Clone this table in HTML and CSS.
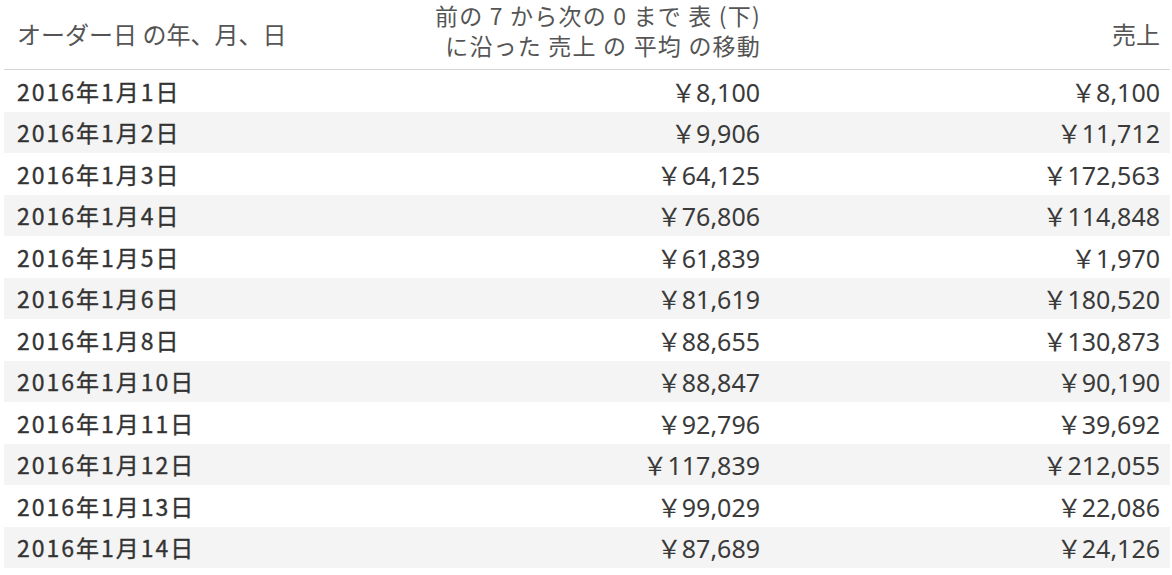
FILE: index.html
```html
<!DOCTYPE html>
<html lang="ja">
<head>
<meta charset="utf-8">
<link rel="stylesheet" href="styles.css">
</head>
<body>
<div class="table">
  <div class="row head">
    <div class="cell c1">オーダー日 の年、月、日</div>
    <div class="cell c2"><span>前の 7 から次の 0 まで 表 (下)</span><span>に沿った 売上 の 平均 の移動</span></div>
    <div class="cell c3">売上</div>
  </div>
  <div class="row"><div class="cell c1">2016年1月1日</div><div class="cell c2">￥8,100</div><div class="cell c3">￥8,100</div></div>
  <div class="row alt"><div class="cell c1">2016年1月2日</div><div class="cell c2">￥9,906</div><div class="cell c3">￥11,712</div></div>
  <div class="row"><div class="cell c1">2016年1月3日</div><div class="cell c2">￥64,125</div><div class="cell c3">￥172,563</div></div>
  <div class="row alt"><div class="cell c1">2016年1月4日</div><div class="cell c2">￥76,806</div><div class="cell c3">￥114,848</div></div>
  <div class="row"><div class="cell c1">2016年1月5日</div><div class="cell c2">￥61,839</div><div class="cell c3">￥1,970</div></div>
  <div class="row alt"><div class="cell c1">2016年1月6日</div><div class="cell c2">￥81,619</div><div class="cell c3">￥180,520</div></div>
  <div class="row"><div class="cell c1">2016年1月8日</div><div class="cell c2">￥88,655</div><div class="cell c3">￥130,873</div></div>
  <div class="row alt"><div class="cell c1">2016年1月10日</div><div class="cell c2">￥88,847</div><div class="cell c3">￥90,190</div></div>
  <div class="row"><div class="cell c1">2016年1月11日</div><div class="cell c2">￥92,796</div><div class="cell c3">￥39,692</div></div>
  <div class="row alt"><div class="cell c1">2016年1月12日</div><div class="cell c2">￥117,839</div><div class="cell c3">￥212,055</div></div>
  <div class="row"><div class="cell c1">2016年1月13日</div><div class="cell c2">￥99,029</div><div class="cell c3">￥22,086</div></div>
  <div class="row alt"><div class="cell c1">2016年1月14日</div><div class="cell c2">￥87,689</div><div class="cell c3">￥24,126</div></div>
</div>
</body>
</html>
```
FILE: styles.css
```css
html, body {
  margin: 0;
  padding: 0;
  background: #ffffff;
}
body {
  font-family: "Noto Sans CJK JP", "Noto Sans", sans-serif;
  color: #333333;
}
.table {
  margin-left: 4px;
  width: 1166px;
}
.row {
  display: grid;
  grid-template-columns: 396px 372px 398px;
  height: 41.5px;
  align-items: center;
}
.row.alt {
  background: #f4f4f4;
}
.row.head {
  height: 69px;
  border-bottom: 1px solid #d6d6d6;
}
.cell {
  white-space: nowrap;
}
.c1 {
  padding-left: 13px;
  font-size: 23px;
  font-weight: 400;
  letter-spacing: 2px;
  color: #333333;
  -webkit-text-stroke: 0.35px #333333;
}
.c2, .c3 {
  text-align: right;
  padding-right: 10px;
  font-family: "Noto Sans", "Noto Sans CJK JP", sans-serif;
  font-size: 25px;
  font-weight: 400;
  color: #3a3a3a;
}
.c2 {
  padding-right: 12px;
}
.head .cell {
  font-family: "Noto Sans CJK JP", sans-serif;
  font-size: 24px;
  font-weight: 400;
  color: #555555;
  letter-spacing: 0;
  -webkit-text-stroke: 0;
}
.head .c1,
.head .c3 {
  padding-bottom: 9px;
}
.head .c2 {
  display: flex;
  flex-direction: column;
  align-items: flex-end;
  font-size: 23px;
  letter-spacing: 1.2px;
  line-height: 30px;
  padding-right: 11px;
  padding-bottom: 16px;
}
```
